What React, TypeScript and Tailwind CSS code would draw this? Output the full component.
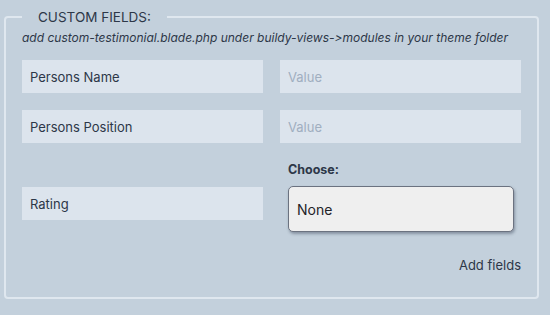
import { useState } from "react";

const FieldInput = ({ value, placeholder }: { value?: string; placeholder?: string }) => {
    return <input
        readOnly
        value={value}
        placeholder={placeholder}
        className="w-full h-[33px] bg-[#dce4ed] px-2 text-[13px] text-[#2d3748] placeholder:text-[#a0aec0] outline-none"
    />
}

export default function App() {
    const [choice, setChoice] = useState("None");

    return <div className="w-[550px] h-[315px] bg-[#c3d0dc] overflow-hidden" style={{ fontFamily: "Inter, 'Noto Sans', sans-serif" }}>
        <fieldset className="ml-[4px] mt-[7px] w-[535px] h-[292px] border-2 border-[#dfe7ef] rounded-[4px] px-4">
            <legend className="ml-0 px-4 text-[13.5px] leading-[20px] text-[#2d3748]">CUSTOM FIELDS:</legend>
            <p className="pt-[3px] text-[12px] leading-[16px] italic text-[#2d3748] [font-feature-settings:'calt'_0]">
                add custom-testimonial.blade.php under buildy-views-&gt;modules in your theme folder
            </p>

            <div className="mt-[14px] grid grid-cols-2 gap-x-[17px] gap-y-[17px]">
                <FieldInput value="Persons Name" />
                <FieldInput placeholder="Value" />
                <FieldInput value="Persons Position" />
                <FieldInput placeholder="Value" />
            </div>

            <div className="mt-[19px] grid grid-cols-2 gap-x-[17px]">
                <div className="pt-[25px]">
                    <FieldInput value="Rating" />
                </div>
                <div>
                    <label className="block ml-2 text-[12.5px] leading-[16px] font-bold text-[#2d3748]">Choose:</label>
                    <div className="mt-2 ml-2 mr-[7px] h-[46px] flex items-center bg-[#efefef] border border-[#6b7280] rounded-[5px] shadow-[1px_2px_3px_rgba(60,70,90,0.45)] px-2">
                        <select
                            value={choice}
                            onChange={(e) => setChoice(e.target.value)}
                            className="w-full appearance-none bg-transparent outline-none text-[14px] text-[#1f2328]"
                        >
                            <option>None</option>
                        </select>
                    </div>
                </div>
            </div>

            <div className="mt-[26px] flex justify-end">
                <button type="button" className="text-[13px] leading-[14px] text-[#2d3748]">Add fields</button>
            </div>
        </fieldset>
    </div>
}
